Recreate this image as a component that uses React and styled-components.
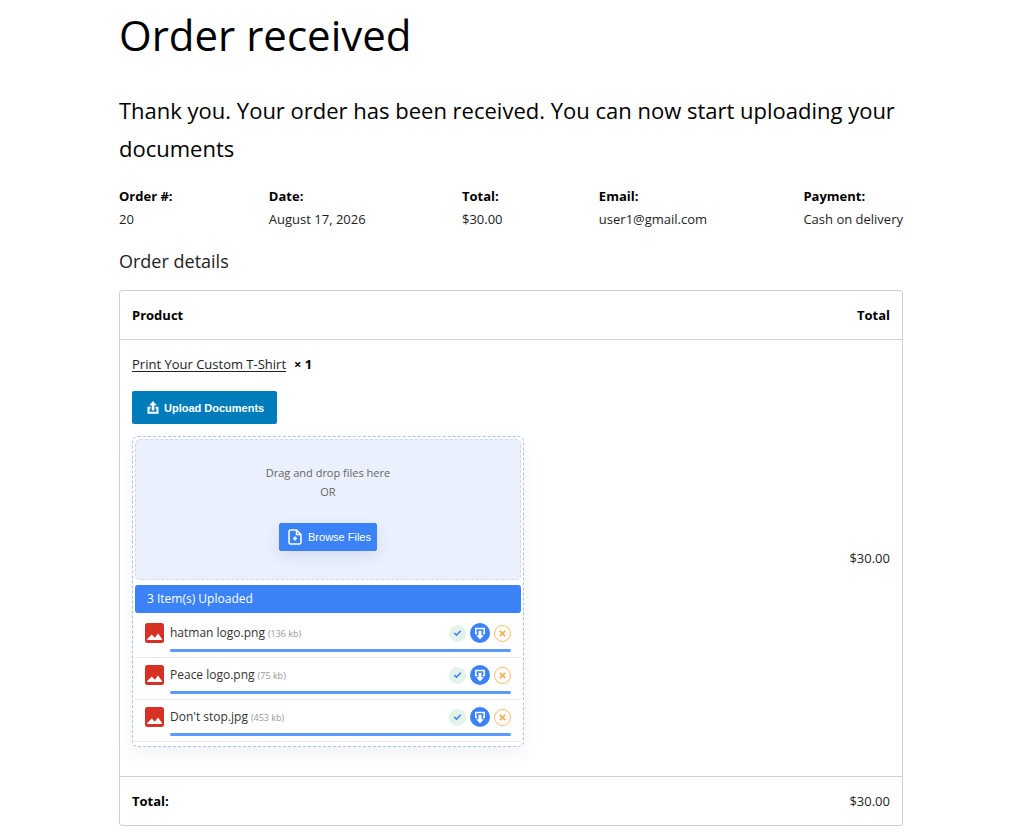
import React from "react";
import styled, { createGlobalStyle } from "styled-components";

const GlobalStyle = createGlobalStyle`
  * { box-sizing: border-box; }
  body {
    margin: 0;
    background: #fff;
    color: #222;
    font-family: "Segoe UI", "Open Sans", "Noto Sans", sans-serif;
    font-size: 13px;
    line-height: 24px;
  }
`;

const Page = styled.main`
  max-width: 1024px;
  margin: 0 auto;
  padding: 5px 121px 14px 119px;
`;

const Title = styled.h1`
  margin: 0;
  color: #000;
  font-size: 42px;
  font-weight: 400;
  line-height: 60px;
`;

const Notice = styled.p`
  margin: 26px 0 18px;
  color: #000;
  font-size: 22px;
  line-height: 38px;
`;

const Overview = styled.dl`
  display: flex;
  justify-content: space-between;
  margin: 0;
  line-height: 23px;
`;

const OverviewItem = styled.div`
  dt {
    color: #000;
    font-weight: 700;
  }
  dd {
    margin: 0;
  }
`;

const SectionTitle = styled.h2`
  margin: 16px 0 15px;
  font-size: 18px;
  font-weight: 400;
  line-height: 28px;
`;

const OrderTable = styled.table`
  width: 100%;
  border: 1px solid #d0d0d0;
  border-radius: 3px;
  border-spacing: 0;
`;

const Cell = styled.td`
  padding: 12px;
  border-bottom: ${(p) => (p.$last ? "0" : "1px solid #d0d0d0")};
  color: ${(p) => (p.as === "th" ? "#000" : "inherit")};
  font-weight: ${(p) => (p.as === "th" ? 700 : 400)};
  text-align: ${(p) => (p.$end ? "right" : "left")};
`;

const ProductLink = styled.a`
  color: #222;
  text-decoration: underline;
  text-underline-offset: 2px;
`;

const Quantity = styled.strong`
  margin-left: 8px;
  color: #000;
`;

const UploadButton = styled.button`
  display: flex;
  align-items: center;
  gap: 5px;
  height: 33px;
  margin: 15px 0 12px;
  padding: 0 13px 0 15px;
  border: 0;
  border-radius: 2px;
  background: #007cba;
  color: #fff;
  font: 700 11px "Liberation Sans", Arial, sans-serif;
`;

const Uploader = styled.section`
  width: 392px;
  max-width: 100%;
  margin-bottom: 17px;
  padding: 2px;
  border: 1px dashed #a3c5fa;
  border-radius: 6px;
  box-shadow: 0 8px 20px rgba(0, 0, 0, 0.05);
`;

const DropZone = styled.div`
  display: flex;
  flex-direction: column;
  align-items: center;
  padding: 23px 0 28px;
  border: 1px dashed #d3d8e2;
  border-radius: 5px;
  background: #eaf0fd;
  color: #666;
  font-size: 11px;
  line-height: 19px;
`;

const BrowseButton = styled.button`
  display: flex;
  align-items: center;
  gap: 5px;
  height: 28px;
  margin-top: 22px;
  padding: 0 6px 0 8px;
  border: 0;
  border-radius: 2px;
  background: #3b82f6;
  box-shadow: 0 5px 14px rgba(60, 80, 120, 0.12);
  color: #fff;
  font: 500 11px "Liberation Sans", Arial, sans-serif;
`;

const UploadedBar = styled.div`
  margin-top: 5px;
  padding: 0 12px;
  border-radius: 3px;
  background: #3b82f6;
  color: #fff;
  font-size: 12px;
  line-height: 28px;
`;

const FileList = styled.ul`
  margin: 0;
  padding: 3px 0 2px;
  list-style: none;
`;

const FileRow = styled.li`
  display: grid;
  grid-template-columns: 19px 1fr auto;
  grid-template-rows: 24px 3px;
  align-items: center;
  gap: 4px 6px;
  padding: 5px 10px;
  border-bottom: 1px solid #e8e8e8;
  color: #333;
  font-size: 12px;
`;

const FileName = styled.span`
  line-height: 24px;
  small {
    margin-left: 3px;
    color: #999;
    font-size: 9px;
  }
`;

const Actions = styled.div`
  display: flex;
  align-items: center;
  gap: 4px;
`;

const Round = styled.button`
  display: grid;
  place-items: center;
  width: ${(p) => p.$size}px;
  height: ${(p) => p.$size}px;
  padding: 0;
  border: ${(p) => (p.$ring ? `1px solid ${p.$ring}` : "0")};
  border-radius: 50%;
  background: ${(p) => p.$fill || "#fff"};
`;

const Progress = styled.div`
  grid-column: 2 / -1;
  height: 3px;
  border-radius: 2px;
  background: #5b9bff;
`;

const UploadIcon = () => (
  <svg width="12" height="14" viewBox="0 0 12 14" aria-hidden="true">
    <path d="M6 0 9.700 4.200H7.300V9.500H4.700V4.200H2.300z" fill="#fff" />
    <path d="M3.500 6.800H1.500v5h9v-5H8.500" fill="none" stroke="#fff" strokeWidth="2" />
  </svg>
);

const FilePlusIcon = () => (
  <svg width="16" height="16" viewBox="0 0 16 16" fill="none" stroke="#fff" strokeWidth="1.500" strokeLinejoin="round" aria-hidden="true">
    <path d="M9.500 1H3.500A1.500 1.500 0 0 0 2 2.500v11A1.500 1.500 0 0 0 3.500 15h9a1.500 1.500 0 0 0 1.500-1.500v-8zV5.500H14" />
    <path d="M8 7.500v4M6 9.500h4" />
  </svg>
);

const PictureIcon = () => (
  <svg width="19" height="20" viewBox="0 0 19 20" aria-hidden="true">
    <rect width="19" height="20" rx="2.500" fill="#d93025" />
    <path d="M2.200 17v-1L6.800 11.500l3 3.200 3.200-4.200 4 5.500v1z" fill="#fff" />
  </svg>
);

const CheckIcon = () => (
  <svg width="9" height="8" viewBox="0 0 9 8" fill="none" stroke="#3b82f6" strokeWidth="1.600" aria-hidden="true">
    <path d="M1.200 4 3.500 6.200 7.800 1.800" />
  </svg>
);

const DownloadIcon = () => (
  <svg width="12" height="13" viewBox="0 0 12 13" aria-hidden="true">
    <path d="M3.200 6.500H1.800V1.500h8.400v5H8.800" fill="none" stroke="#fff" strokeWidth="1.500" />
    <path d="M4.500 3.800h3v4.400h2.300L6 12.500 2.200 8.200h2.300z" fill="#fff" />
  </svg>
);

const CrossIcon = () => (
  <svg width="7" height="7" viewBox="0 0 7 7" stroke="#f7b05b" strokeWidth="1.900" aria-hidden="true">
    <path d="M.8.8l5.400 5.400M6.200.8.8 6.200" />
  </svg>
);

const overview = [
  ["Order #:", "20"],
  ["Date:", "August 17, 2026"],
  ["Total:", "$30.00"],
  ["Email:", "user1@gmail.com"],
  ["Payment:", "Cash on delivery"],
];

const files = [
  ["hatman logo.png", "136 kb"],
  ["Peace logo.png", "75 kb"],
  ["Don't stop.jpg", "453 kb"],
];

export default function App() {
  return (
    <>
      <GlobalStyle />
      <Page>
        <Title>Order received</Title>
        <Notice>
          Thank you. Your order has been received. You can now start uploading your documents
        </Notice>
        <Overview>
          {overview.map(([label, value]) => (
            <OverviewItem key={label}>
              <dt>{label}</dt>
              <dd>{value}</dd>
            </OverviewItem>
          ))}
        </Overview>
        <SectionTitle>Order details</SectionTitle>
        <OrderTable>
          <thead>
            <tr>
              <Cell as="th" scope="col">Product</Cell>
              <Cell as="th" scope="col" $end>Total</Cell>
            </tr>
          </thead>
          <tbody>
            <tr>
              <Cell>
                <ProductLink href="#product">Print Your Custom T-Shirt</ProductLink>
                <Quantity>× 1</Quantity>
                <UploadButton type="button">
                  <UploadIcon />
                  Upload Documents
                </UploadButton>
                <Uploader aria-label="Document upload">
                  <DropZone>
                    <span>Drag and drop files here</span>
                    <span>OR</span>
                    <BrowseButton type="button">
                      <FilePlusIcon />
                      Browse Files
                    </BrowseButton>
                  </DropZone>
                  <UploadedBar>3 Item(s) Uploaded</UploadedBar>
                  <FileList>
                    {files.map(([name, size]) => (
                      <FileRow key={name}>
                        <PictureIcon />
                        <FileName>
                          {name}
                          <small>({size})</small>
                        </FileName>
                        <Actions>
                          <Round as="span" $size={17} $fill="#e3f3e9">
                            <CheckIcon />
                          </Round>
                          <Round type="button" $size={20} $fill="#3b82f6" aria-label={`Download ${name}`}>
                            <DownloadIcon />
                          </Round>
                          <Round type="button" $size={17} $ring="#f9b868" aria-label={`Remove ${name}`}>
                            <CrossIcon />
                          </Round>
                        </Actions>
                        <Progress role="progressbar" aria-valuenow={100} aria-label={`${name} upload`} />
                      </FileRow>
                    ))}
                  </FileList>
                </Uploader>
              </Cell>
              <Cell $end>$30.00</Cell>
            </tr>
          </tbody>
          <tfoot>
            <tr>
              <Cell as="th" scope="row" $last>Total:</Cell>
              <Cell $end $last>$30.00</Cell>
            </tr>
          </tfoot>
        </OrderTable>
      </Page>
    </>
  );
}
